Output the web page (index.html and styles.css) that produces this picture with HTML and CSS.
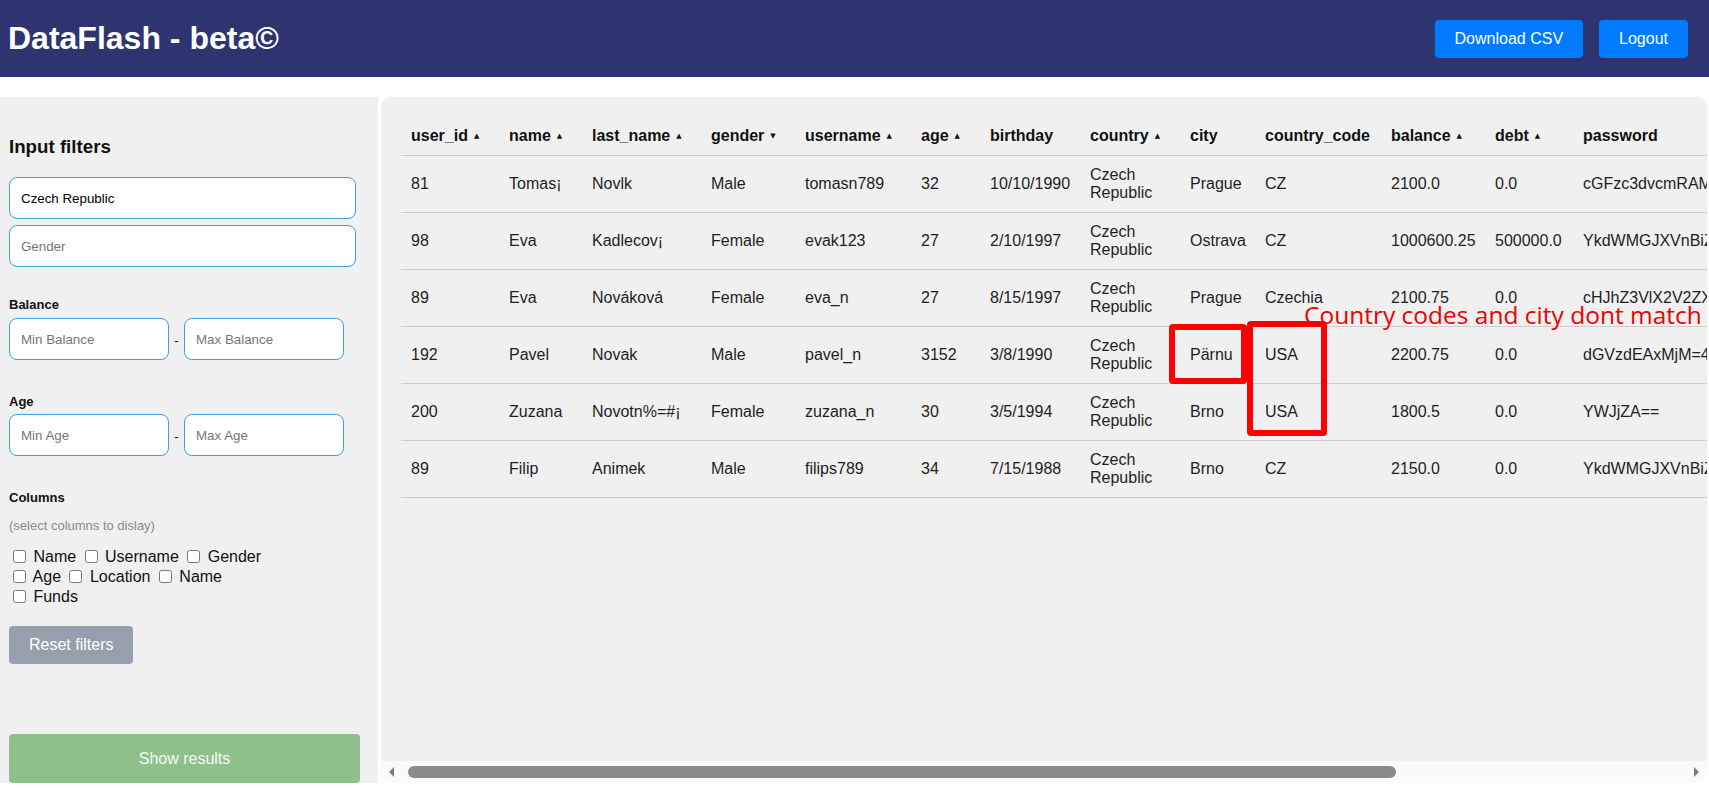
FILE: index.html
```html
<!DOCTYPE html>
<html lang="en">
<head>
<meta charset="utf-8">
<title>DataFlash - beta</title>
<link rel="stylesheet" href="styles.css">
</head>
<body>
<header class="topbar">
  <h1 class="brand">DataFlash - beta©</h1>
  <div class="top-actions">
    <button class="btn btn-primary">Download CSV</button>
    <button class="btn btn-primary">Logout</button>
  </div>
</header>

<main class="layout">
  <aside class="sidebar">
    <h3 class="side-title">Input filters</h3>
    <input class="field" type="text" value="Czech Republic">
    <input class="field" type="text" placeholder="Gender">

    <div class="group group-balance">
      <div class="group-label">Balance</div>
      <div class="range">
        <input class="field field-half" type="text" placeholder="Min Balance">
        <span class="dash">-</span>
        <input class="field field-half" type="text" placeholder="Max Balance">
      </div>
    </div>

    <div class="group group-age">
      <div class="group-label">Age</div>
      <div class="range">
        <input class="field field-half" type="text" placeholder="Min Age">
        <span class="dash">-</span>
        <input class="field field-half" type="text" placeholder="Max Age">
      </div>
    </div>

    <div class="group group-columns">
      <div class="group-label">Columns</div>
      <div class="hint">(select columns to dislay)</div>
      <div class="checks">
        <label class="opt"><input type="checkbox"> Name</label>
        <label class="opt"><input type="checkbox"> Username</label>
        <label class="opt"><input type="checkbox"> Gender</label>
        <label class="opt"><input type="checkbox"> Age</label>
        <label class="opt"><input type="checkbox"> Location</label>
        <label class="opt"><input type="checkbox"> Name</label>
        <label class="opt"><input type="checkbox"> Funds</label>
      </div>
    </div>

    <button class="btn btn-reset">Reset filters</button>
    <button class="btn btn-show">Show results</button>
  </aside>

  <section class="table-panel">
    <div class="table-scroll">
      <table class="data">
        <colgroup>
          <col class="c-id"><col class="c-name"><col class="c-last"><col class="c-gender">
          <col class="c-user"><col class="c-age"><col class="c-birth"><col class="c-country">
          <col class="c-city"><col class="c-code"><col class="c-bal"><col class="c-debt"><col class="c-pass">
        </colgroup>
        <thead>
          <tr>
            <th>user_id<span class="sort">▲</span></th>
            <th>name<span class="sort">▲</span></th>
            <th>last_name<span class="sort">▲</span></th>
            <th>gender<span class="sort">▼</span></th>
            <th>username<span class="sort">▲</span></th>
            <th>age<span class="sort">▲</span></th>
            <th>birthday</th>
            <th>country<span class="sort">▲</span></th>
            <th>city</th>
            <th>country_code</th>
            <th>balance<span class="sort">▲</span></th>
            <th>debt<span class="sort">▲</span></th>
            <th>password</th>
          </tr>
        </thead>
        <tbody>
          <tr>
            <td>81</td><td>Tomas¡</td><td>Novlk</td><td>Male</td><td>tomasn789</td><td>32</td><td>10/10/1990</td>
            <td>Czech Republic</td><td>Prague</td><td>CZ</td><td>2100.0</td><td>0.0</td><td>cGFzc3dvcmRAMTIz</td>
          </tr>
          <tr>
            <td>98</td><td>Eva</td><td>Kadlecov¡</td><td>Female</td><td>evak123</td><td>27</td><td>2/10/1997</td>
            <td>Czech Republic</td><td>Ostrava</td><td>CZ</td><td>1000600.25</td><td>500000.0</td><td>YkdWMGJXVnBiZz09QGFiYw==</td>
          </tr>
          <tr>
            <td>89</td><td>Eva</td><td>Nováková</td><td>Female</td><td>eva_n</td><td>27</td><td>8/15/1997</td>
            <td>Czech Republic</td><td>Prague</td><td>Czechia</td><td>2100.75</td><td>0.0</td><td>cHJhZ3VlX2V2ZXIxMjM=</td>
          </tr>
          <tr>
            <td>192</td><td>Pavel</td><td>Novak</td><td>Male</td><td>pavel_n</td><td>3152</td><td>3/8/1990</td>
            <td>Czech Republic</td><td>Pärnu</td><td>USA</td><td>2200.75</td><td>0.0</td><td>dGVzdEAxMjM=4f2a</td>
          </tr>
          <tr>
            <td>200</td><td>Zuzana</td><td>Novotn%=#¡</td><td>Female</td><td>zuzana_n</td><td>30</td><td>3/5/1994</td>
            <td>Czech Republic</td><td>Brno</td><td>USA</td><td>1800.5</td><td>0.0</td><td>YWJjZA==</td>
          </tr>
          <tr>
            <td>89</td><td>Filip</td><td>Animek</td><td>Male</td><td>filips789</td><td>34</td><td>7/15/1988</td>
            <td>Czech Republic</td><td>Brno</td><td>CZ</td><td>2150.0</td><td>0.0</td><td>YkdWMGJXVnBiZz09</td>
          </tr>
        </tbody>
      </table>
    </div>
    <div class="hscroll">
      <span class="hscroll-btn"><span class="arrow arrow-left"></span></span>
      <div class="hscroll-track"><div class="hscroll-thumb"></div></div>
      <span class="hscroll-btn"><span class="arrow arrow-right"></span></span>
    </div>
  </section>
</main>

<div class="annot-box annot-city"></div>
<div class="annot-box annot-code"></div>
<div class="annot-text">Country codes and city dont match</div>
</body>
</html>
```

FILE: styles.css
```css
html, body {
  margin: 0;
  padding: 0;
  background: #ffffff;
  font-family: "Liberation Sans", Arial, sans-serif;
  color: #111;
}

/* ---------- top bar ---------- */
.topbar {
  height: 77px;
  background: #2e3470;
  display: flex;
  align-items: center;
  justify-content: space-between;
  padding: 0 21px 0 8px;
}

.brand {
  margin: 0;
  font-size: 32px;
  font-weight: bold;
  color: #ffffff;
  line-height: 37px;
}

.top-actions {
  display: flex;
  gap: 16px;
}

.btn {
  font-family: "Liberation Sans", Arial, sans-serif;
  font-size: 16px;
  line-height: 18px;
  height: 38px;
  padding: 0 20px;
  border: none;
  border-radius: 4px;
  color: #ffffff;
  cursor: pointer;
}

.btn-primary {
  background: #007bff;
}

/* ---------- layout ---------- */
.layout {
  display: flex;
  gap: 3px;
  margin-top: 20px;
  height: 686px;
}

/* ---------- sidebar ---------- */
.sidebar {
  width: 378px;
  flex: none;
  box-sizing: border-box;
  background: #f0f0f0;
  padding: 39px 0 0 9px;
  display: flex;
  flex-direction: column;
  align-items: flex-start;
}

.side-title {
  margin: 0 0 20px;
  font-size: 18.72px;
  line-height: 21px;
  font-weight: bold;
  color: #111;
}

.field {
  display: block;
  box-sizing: border-box;
  width: 347px;
  height: 42px;
  margin: 0 0 6px;
  padding: 0 11px;
  border: 1px solid #3d9fdc;
  border-radius: 8px;
  background: #ffffff;
  font-family: "Liberation Sans", Arial, sans-serif;
  font-size: 13.33px;
  color: #000;
  outline: none;
}

.field::placeholder {
  color: #767676;
}

.group-label {
  font-size: 13px;
  line-height: 15px;
  font-weight: bold;
  color: #111;
  margin-bottom: 6px;
}

.group-balance {
  margin-top: 24px;
}

.group-age {
  margin-top: 34px;
}

.group-age .group-label {
  margin-bottom: 5px;
}

.group-columns {
  margin-top: 34px;
}

.range {
  display: flex;
  align-items: center;
}

.field-half {
  width: 160px;
  margin: 0;
}

.dash {
  width: 15px;
  text-align: center;
  font-size: 13px;
  padding-top: 2px;
  color: #111;
}

.hint {
  margin-top: 13px;
  font-size: 13px;
  line-height: 15px;
  color: #8a8a8a;
}

.checks {
  margin-top: 14px;
  width: 280px;
  font-size: 16px;
  line-height: 20px;
  color: #111;
}

.opt {
  white-space: nowrap;
}

.opt input {
  width: 13px;
  height: 13px;
  margin: 0 3px 0 4px;
  vertical-align: -1px;
}

.btn-reset {
  margin-top: 19px;
  background: #95a0ac;
}

.btn-show {
  margin-top: auto;
  width: 351px;
  height: 49px;
  background: #8dc08b;
  color: #f4fbf3;
}

/* ---------- table panel ---------- */
.table-panel {
  width: 1326px;
  flex: none;
  box-sizing: border-box;
  background: #f0f0f0;
  border-radius: 10px;
  overflow: hidden;
  display: flex;
  flex-direction: column;
}

.table-scroll {
  flex: 1;
  min-height: 0;
  overflow: hidden;
  padding: 20px 20px 0;
}

.hscroll {
  flex: none;
  height: 22px;
  background: #fafafa;
  display: flex;
  align-items: center;
}

.hscroll-btn {
  width: 27px;
  height: 22px;
  flex: none;
  display: flex;
  align-items: center;
  justify-content: center;
}

.arrow {
  width: 0;
  height: 0;
  border-top: 5px solid transparent;
  border-bottom: 5px solid transparent;
}

.arrow-left {
  border-right: 5px solid #7a7a7a;
  margin-right: 6px;
}

.arrow-right {
  border-left: 5px solid #7a7a7a;
  margin-left: 6px;
}

.hscroll-track {
  flex: 1;
  height: 12px;
}

.hscroll-thumb {
  width: 988px;
  height: 12px;
  border-radius: 6px;
  background: #8a8a8a;
}

.data {
  border-collapse: collapse;
  table-layout: fixed;
  width: 1667px;
}

.c-id { width: 98px; }
.c-name { width: 83px; }
.c-last { width: 119px; }
.c-gender { width: 94px; }
.c-user { width: 116px; }
.c-age { width: 69px; }
.c-birth { width: 100px; }
.c-country { width: 100px; }
.c-city { width: 75px; }
.c-code { width: 126px; }
.c-bal { width: 104px; }
.c-debt { width: 88px; }
.c-pass { width: 495px; }

.data th,
.data td {
  padding: 10px;
  font-size: 16px;
  line-height: 18px;
  text-align: left;
  border-bottom: 1px solid #cccccc;
  vertical-align: middle;
}

.data th {
  font-weight: bold;
  color: #111;
  white-space: nowrap;
}

.data td {
  color: #1e1e1e;
}

.data td:nth-child(11),
.data td:nth-child(12),
.data td:nth-child(13) {
  white-space: nowrap;
}

.sort {
  font-size: 7px;
  margin-left: 6px;
  vertical-align: 3px;
  font-family: "DejaVu Sans", sans-serif;
}

/* ---------- screenshot annotations (overlay) ---------- */
.annot-box {
  position: absolute;
  box-sizing: border-box;
  border: 6px solid #ff0000;
  border-radius: 4px;
}

.annot-city {
  left: 1169px;
  top: 324px;
  width: 78px;
  height: 60px;
}

.annot-code {
  left: 1247px;
  top: 321px;
  width: 80px;
  height: 115px;
}

.annot-text {
  position: absolute;
  left: 1304px;
  top: 303px;
  font-family: "Open Sans", sans-serif;
  font-size: 24.5px;
  line-height: 24px;
  color: #ee0000;
  white-space: nowrap;
}
```
